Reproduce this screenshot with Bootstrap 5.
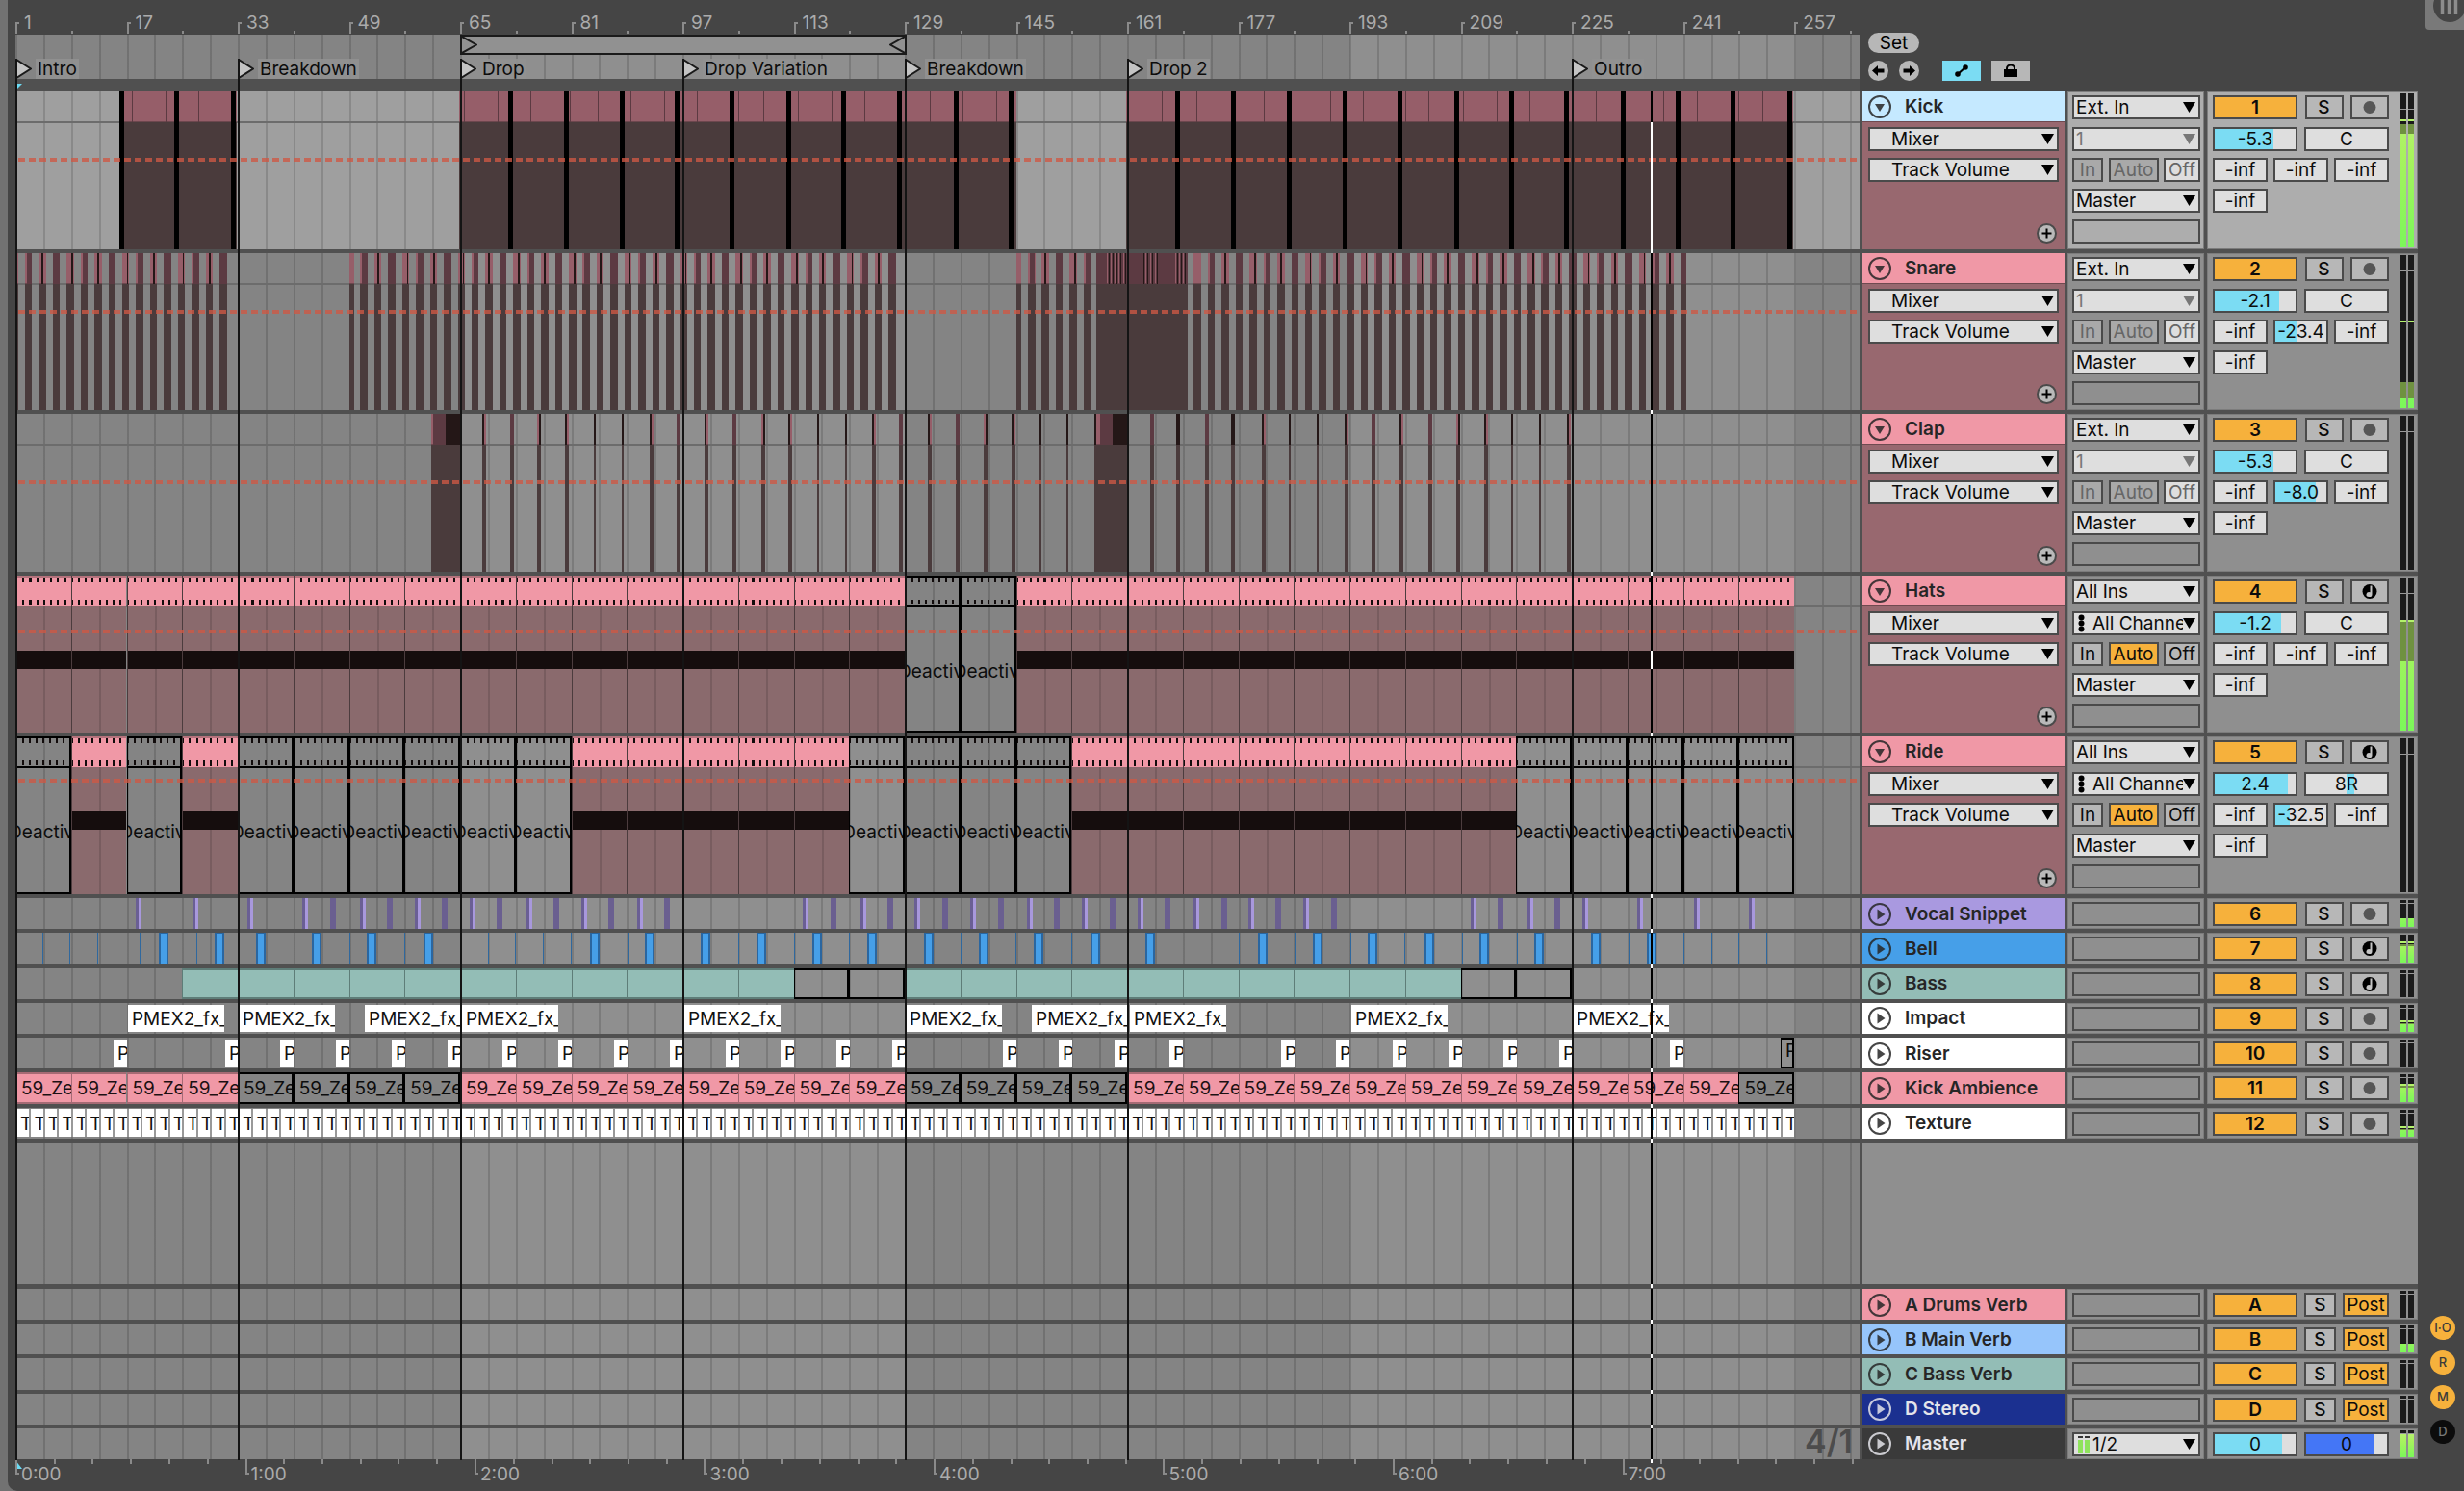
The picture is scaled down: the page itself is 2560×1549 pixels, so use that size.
<!DOCTYPE html>
<html lang="en">
<head>
<meta charset="utf-8">
<meta name="viewport" content="width=device-width, initial-scale=1">
<title>Arrangement View</title>
<link href="https://cdn.jsdelivr.net/npm/bootstrap@5.3.0/dist/css/bootstrap.min.css" rel="stylesheet">
<style>
:root{
  --panel:#454545; --gapline:#505050; --edge:#4a4a4a; --field:#dedede; --btn:#b7b7b7;
  --amber:#f6b13c; --cyan:#7bdcf3; --band-a:#848484; --band-b:#8f8f8f; --pink:#f098a6;
  --lane-grid:repeating-linear-gradient(90deg,rgba(0,0,0,.14) 0 2px,transparent 2px 1.50716%);
  --lane-bands:linear-gradient(90deg,var(--band-a) 24.13%,var(--band-b) 24.13% 48.24%,var(--band-a) 48.24% 72.37%,var(--band-b) 72.37% 96.53%,var(--band-a) 96.53%);
}
body{font-family:Inter,"Liberation Sans",sans-serif;font-size:19px;line-height:24px;background:#727272;color:#0c0c0c;overflow:hidden}
.app-shell{margin-left:8px;background:var(--panel);border-bottom-left-radius:10px}
.app-top{height:95px;padding-left:8px}
.arrange{padding:0 48px 0 8px}
.col-name{width:210px}.col-io{width:142px}.col-mix{width:219px}
.col-side{width:625px;margin-left:3px}
/* rulers */
.ruler-bars{height:36px}
.ruler-bars .bar-num{position:absolute;top:12px;line-height:24px;padding-left:9px;color:#ababab}
.ruler-bars .bar-num::before{content:"";position:absolute;left:0;top:11px;width:4px;height:12px;border:solid #8a8a8a;border-width:2px 0 0 2px}
.tick-minor{position:absolute;bottom:1px;width:2px;height:3px;background:#8a8a8a}
.scrub{height:46px;background:var(--lane-grid),var(--lane-bands)}
.under-scrub{height:13px;background:var(--gapline)}
.loop-brace{position:absolute;top:0;height:21px;border:2px solid #1a1a1a;background:#919191}
.locator{position:absolute;top:25px;height:21px;display:flex;align-items:center;gap:4px;white-space:nowrap}
.locator span{background:rgba(145,145,145,.9);padding:0 2px;line-height:21px}
.play-mark{position:absolute;left:1px;bottom:2px;width:6px;height:6px;background:#6bdcf5;clip-path:polygon(0 0,100% 0,0 100%)}
.ruler-time{height:29px;padding-left:8px;margin-right:628px}
.ruler-time .t-num{position:absolute;top:0;padding-left:6px;color:#ababab;line-height:24px}
.ruler-time .t-num::before{content:"";position:absolute;left:0;top:-4px;width:4px;height:16px;border:solid #8a8a8a;border-width:0 0 2px 2px}
.ruler-time .t-tick{position:absolute;top:-4px;width:2px;height:5px;background:#8a8a8a}
.start-mark{position:absolute;left:0;top:-3px;width:7px;height:9px;background:#6bdcf5;clip-path:polygon(0 0,100% 100%,0 100%)}
/* rows */
.tracks-open{height:838px}.tracks-folded{height:254px}.tracks-return{height:181px}
.track{border-bottom:4px solid var(--gapline);background:var(--gapline);gap:3px}
.tracks-return .track:last-child{border-bottom-color:var(--panel)}
.empty-zone{border-bottom:5px solid var(--gapline);background:var(--gapline);gap:3px}
.empty-side{width:577px;background:#8f8f8f}
.lane{background:var(--lane-grid),var(--lane-bands)}
.tracks-open .lane::after{content:"";position:absolute;left:0;right:0;top:31px;height:2px;background:#6c6c6c;z-index:0}
.selected .lane{--lane-bands:linear-gradient(#9f9f9f,#9f9f9f)}
.seg{position:absolute;z-index:1;overflow:hidden;white-space:nowrap}
.seg-head{top:0;height:32px}.seg-body{top:32px;bottom:0}.seg-full{top:0;bottom:0}
.env{position:absolute;left:3px;right:0;height:4px;z-index:3;background:repeating-linear-gradient(90deg,rgba(206,88,68,.78) 0 7px,transparent 7px 11px)}
.c-kick{background:#965e69;box-shadow:inset 0 -1px #6d474e}
.c-kbody{background:#4a3b3c}.c-dark{background:#5c3a42}.c-ink{background:#241717}.c-black{background:#000}
.mclip{position:absolute;z-index:1;top:0;bottom:0;overflow:hidden;white-space:nowrap;border-left:1px solid #4c3c3e;background:linear-gradient(90deg,transparent 49.5%,rgba(0,0,0,.13) 49.5% 53%,transparent 53%) #8a6a6d}
.mclip .m-head{height:32px;background:var(--pink);border-top:2px solid #b4727c}
.mclip .m-ticks{height:29px;margin-left:-1px;--tk:repeating-linear-gradient(90deg,#120c0c 0 2px,transparent 2px 12.5%);background:var(--tk) 0 0/100% 5px no-repeat,var(--tk) 0 23px/100% 6px no-repeat}
.mclip .m-band{position:absolute;left:0;right:0;top:78px;height:19px;background:#150d0d}
.mclip.off{background:none;border:2px solid #000;border-left-width:1px}
.mclip.off .m-head{background:none;border-top:0;height:31px;border-bottom:2px solid #000}
.mclip.off .m-ticks{height:28px}
.mclip .m-text{position:absolute;left:-8px;top:86px}
.c-vocal{background:#a898dc;border-left:3px solid #6a5f94}.c-vocal2{background:#6a5f90}
.c-bell{background:#469fe8;border:solid #2a66a0;border-width:1px 2px}.c-bell-line{background:#2f689e}
.c-bass{background:#93bdb6;border:solid #5e7d78;border-width:2px 0 2px 1px}
.c-off{border:2px solid #000;border-left-width:1px}
.c-paper{top:2px;bottom:2px;background:#fff;color:#111;padding-left:4px;line-height:30px}
.c-amb{background:var(--pink);border:solid #a56a74;border-width:2px 0 2px 1px;padding-left:5px;line-height:30px;color:#1c1012}
.c-amboff{border:2px solid #000;border-left-width:1px;padding-left:5px;line-height:30px;background:#858585}
.c-tex{top:1px;bottom:2px;background:#fff;border-left:2px solid #999;padding-left:3px;line-height:31px;color:#111}
.ph{position:absolute;z-index:5;top:0;bottom:0;width:2px;background:#000}
.ph::after{content:"";position:absolute;left:0;width:2px;top:100%;height:4px;background:#fff}
.ph-kick{background:linear-gradient(#000 32px,#fff 32px)}
.ph-hats{background:linear-gradient(#000 78px,#fff 78px 97px,#000 97px)}
.marker-layer{inset:0 628px 0 8px;pointer-events:none;z-index:6}
.marker-line{position:absolute;top:-34px;bottom:3px;width:2px;background:#141414}
.quant{position:absolute;right:7px;bottom:2px;font-size:34px;line-height:32px;font-weight:600;color:#4c4c4c;z-index:4}
/* headers */
.name-bar{height:32px;padding:1px 0 0 6px;gap:14px;font-weight:600;color:#262626}
.tracks-open .name-bar{border-bottom:1px solid #6f4a50}
.name-light{color:#e4e4ea}
.fold-btn{padding:0;border:0;background:none;color:inherit;line-height:0;opacity:.85}
.name-body{background:#98686f;padding:5px 6px 0 6px;gap:7px}
.sel{-webkit-appearance:none;appearance:none;height:25px;border:2px solid var(--edge);border-radius:0;font:inherit;line-height:21px;color:#0c0c0c;padding:0 22px 0 2px;width:100%;
 background:url("data:image/svg+xml,%3Csvg xmlns='http://www.w3.org/2000/svg' width='13' height='12'%3E%3Cpath d='M0 1h13L6.500 12z'/%3E%3C/svg%3E") right 3px top 4px no-repeat var(--field)}
.sel-wide{padding-left:22px}
.sel:disabled{color:#777;opacity:1;background-image:url("data:image/svg+xml,%3Csvg xmlns='http://www.w3.org/2000/svg' width='13' height='12'%3E%3Cpath fill='%23777' d='M0 1h13L6.500 12z'/%3E%3C/svg%3E")}
.sel-chan{padding-left:19px;padding-right:16px}
.sel-ico{position:absolute;left:6px;top:3px}
.plus-btn{position:absolute;right:8px;bottom:6px;padding:0;border:0;background:none;line-height:0}
.panel-cell{background:#8f8f8f;padding:4px 4px 0 5px;box-shadow:inset 0 0 0 1px #7c7c7c}
.selected .panel-cell{background:#adadad}
.col-mix.panel-cell{padding:4px 0 0 6px}
.ctl-stack{gap:7px}
.tracks-open .ctl-stack>:first-child{margin-bottom:1px}
.ctl{height:25px;border:2px solid var(--edge);border-radius:0;padding:0;font:inherit;line-height:21px;background:var(--btn);color:#0c0c0c;text-align:center;flex:none;overflow:hidden;white-space:nowrap}
.ctl-on{background:var(--amber)}
.ctl-dim{color:#666;background:#a9a9a9}
.ctl-dim.ctl-lit{background:var(--field)}
.ctl-blank{height:25px;border:2px solid var(--edge)}
.ctl-num{width:88px;font-weight:600}.w40{width:40px}.w33{width:33px}.w48{width:48px}.w88{width:88px}.w57{width:57px}.w32{width:32px}.w52{width:52px}.w38{width:38px}
.ctl-s{font-weight:500}
.val{background:linear-gradient(90deg,transparent var(--from,0%),var(--tone,var(--cyan)) var(--from,0%) var(--to,0%),transparent var(--to,0%)) var(--field)}
.mix-grid{width:183px;gap:7px}
.meters{position:absolute;right:4px;top:2px;bottom:2px;gap:2px}
.meter{width:6px;background:linear-gradient(#9a9a9a,#9a9a9a) 0 var(--mark,3px)/100% 1px no-repeat,linear-gradient(to top,transparent var(--pk),#b4f26c var(--pk) calc(var(--pk) + var(--pw,0px)),transparent 0),linear-gradient(to top,transparent var(--lv),var(--dimtone,#6f9140) var(--lv) var(--dm),transparent 0),linear-gradient(to top,transparent var(--lv),#1b1b1b var(--lv)),linear-gradient(to top,#7bf75a,#a8f25e 60%,#bdf078)}
.tracks-open .meter{--mark:16px}
/* top right & right rail */
.pill{width:53px;height:21px;border:0;border-radius:11px;background:#b7b7b7;padding:0;line-height:21px}
.tool-row{gap:11px}
.round-btn{width:21px;height:21px;border:0;border-radius:50%;padding:0;background:#b7b7b7;line-height:0}
.flat-btn{width:40px;height:21px;border:0;padding:0;background:#b7b7b7;line-height:0}
.flat-on{background:var(--cyan);margin-left:13px}
.top-tools{padding:34px 0 0 6px}
.corner-tab{position:absolute;right:0;top:0;width:40px;height:31px;border:0;padding:0;background:#797979;border-bottom-left-radius:4px;line-height:0}
.rail{position:absolute;right:9px;bottom:49px;gap:11px}
.rail button{width:26px;height:25px;border:0;border-radius:50%;padding:0;background:var(--amber);color:#3a3a3a;font-size:13px;line-height:25px;font-weight:500}
.rail .rail-off{background:#0c0c0c;color:#777}
</style>
</head>
<body>
<div class="app-shell vh-100 d-flex flex-column position-relative">
  <header class="app-top d-flex flex-shrink-0">
    <div class="flex-fill">
      <div class="ruler-bars position-relative" id="barRuler"></div>
      <div class="scrub position-relative" id="scrub"></div>
      <div class="under-scrub position-relative"><div class="play-mark"></div></div>
    </div>
    <div class="col-side top-tools">
      <button class="pill d-block" type="button">Set</button>
      <div class="tool-row d-flex mt-2">
        <button class="round-btn" type="button" aria-label="Previous locator"><svg width="21" height="21"><path d="M4 10.500l6-5.500v3.500h6.500v4H10V16z"/></svg></button>
        <button class="round-btn" type="button" aria-label="Next locator"><svg width="21" height="21"><path d="M17 10.500l-6-5.500v3.500H4.500v4H11V16z"/></svg></button>
        <button class="flat-btn flat-on" type="button" aria-label="Automation mode"><svg width="40" height="21"><circle cx="16" cy="14" r="2.800"/><circle cx="24" cy="7" r="2.800"/><path d="M16 14l8-7" stroke="#000" stroke-width="2.200"/></svg></button>
        <button class="flat-btn" type="button" aria-label="Lock envelopes"><svg width="40" height="21"><rect x="13" y="9" width="14" height="8"/><path d="M16 10V8a4 3.500 0 0 1 8 0V10" fill="none" stroke="#000" stroke-width="2"/></svg></button>
      </div>
    </div>
  </header>

  <main class="arrange flex-fill d-flex flex-column position-relative">
    <section class="tracks-open d-flex flex-column" id="openTracks"></section>
    <section class="tracks-folded d-flex flex-column" id="foldedTracks"></section>
    <div class="empty-zone flex-fill d-flex">
      <div class="lane flex-fill position-relative"><i class="ph"></i></div>
      <div class="empty-side"></div>
    </div>
    <section class="tracks-return d-flex flex-column" id="returnTracks"></section>
    <div class="marker-layer position-absolute" id="markers"></div>
  </main>

  <footer class="ruler-time"><div class="position-relative h-100" id="timeRuler"></div></footer>

  <button class="corner-tab" type="button" aria-label="Scroll handle"><svg width="40" height="31"><circle cx="25" cy="6" r="17" fill="#454545"/><path d="M17.500 0v15M24.500 0v15M31.500 0v15" stroke="#8c8c8c" stroke-width="3.500"/></svg></button>
  <div class="rail d-flex flex-column">
    <button type="button">I·O</button><button type="button">R</button><button type="button">M</button><button class="rail-off" type="button">D</button>
  </div>
</div>

<script src="https://cdn.jsdelivr.net/npm/bootstrap@5.3.0/dist/js/bootstrap.bundle.min.js"></script>
<script>
const BARS = 265.4, SPAN = 1916;
const pct = u => (u / SPAN * 100).toFixed(3) + '%';        // timeline unit -> lane share
const bar = b => (b - 1) / BARS * SPAN;                     // bar number -> timeline unit
const box = (cls, a, b, html = '') => `<div class="${cls}" style="left:${pct(a)};width:${pct(b - a)}">${html}</div>`;
const seg = (kind, color, a, b, html) => box(`seg seg-${kind} ${color}`, a, b, html);
const dot = (cls, a, html = '') => `<div class="${cls}" style="left:${pct(a)}">${html}</div>`;
const seq = n => [...Array(n).keys()];

/* ---- rulers ---- */
document.getElementById('barRuler').innerHTML =
  seq(17).map(i => dot('bar-num', bar(1 + 16 * i), 1 + 16 * i)).join('') +
  seq(17).map(i => dot('tick-minor', bar(9 + 16 * i))).join('');
const flag = '<svg width="17" height="21"><path d="M1 1v19l15-9.500z" fill="#c4c4c4" stroke="#1a1a1a" stroke-width="2"/></svg>';
const LOCS = [[1, 'Intro'], [33, 'Breakdown'], [65, 'Drop'], [97, 'Drop Variation'], [129, 'Breakdown'], [161, 'Drop 2'], [225, 'Outro']];
document.getElementById('scrub').innerHTML =
  box('loop-brace d-flex justify-content-between', bar(65), bar(129) + 2,
    '<svg width="16" height="17"><path d="M0 0l15 8.500L0 17" fill="none" stroke="#1a1a1a" stroke-width="2"/></svg><svg width="16" height="17"><path d="M16 0L1 8.500 16 17" fill="none" stroke="#1a1a1a" stroke-width="2"/></svg>') +
  LOCS.map(l => dot('locator', bar(l[0]), flag + `<span>${l[1]}</span>`)).join('');
document.getElementById('markers').innerHTML = LOCS.map(l => dot('marker-line', bar(l[0]))).join('');
document.getElementById('timeRuler').innerHTML = '<div class="start-mark"></div>' +
  seq(8).map(i => dot('t-num', 238.500 * i, i + ':00')).join('') +
  seq(49).filter(i => i % 6 || i == 48).map(i => dot('t-tick', 238.500 / 6 * i)).join('');

/* ---- lane contents ---- */
const px = s => s.split(' ').map(x => +x - 16);
function kickLane() {
  const runs = [[124, 246], [477, 1056], [1170, 1863]];
  const black = px('124 181 240 528 586 644 701 758 817 874 932 991 1048 1221 1279 1337 1395 1452 1511 1568 1625 1684 1741 1798 1857');
  const thin = px('137 172 206 482 517 551 592 621 655 690 724 767 793 829 864 898 966 1000 1035 1207 1243 1313 1346 1382 1416 1460 1484 1520 1555 1589 1658 1693 1728 1763 1806 1831');
  return runs.map(r => seg('head', 'c-kick', r[0] - 16, r[1] - 16) + seg('body', 'c-kbody', r[0] - 16, r[1] - 16)).join('') +
    thin.map(x => seg('head', 'c-dark', x, x + 1.500)).join('') + black.map(x => seg('full', 'c-black', x, x + 5.500)).join('');
}
function snareLane() {
  let h = '';
  const step = bar(3), run = (from, to, lead) => {
    let k = 0;
    for (let x = from + lead; x < to - 4; x += step, k++) {
      const a = Math.max(x, from), b = Math.min(x + 7.500, to);
      h += seg('body', 'c-kbody', a, b) + seg('head', k % 4 == 3 ? 'c-dark' : 'c-kick', a, b);
      if (k % 4 == 1) h += seg('head', 'c-dark', a + 2, b);
      if (k % 4 == 2) h += seg('head', 'c-ink', a + 3, a + 5);
      if (k % 4 == 0 && k) h += seg('head', 'c-ink', a + 5, a + 6.500);
    }
  };
  run(0, 221, -4.500); run(bar(49), 916, -2.500); run(bar(145), 1123, -2); run(1218, 1736, 6.500);
  h += seg('body', 'c-kbody', 1123, 1218) + seg('head', 'c-dark', 1123, 1218);
  [1134, 1138, 1142, 1146, 1151, 1170, 1174, 1179, 1184, 1205, 1209, 1213].forEach(x => h += seg('head', 'c-kick', x, x + 1.500) + seg('head', 'c-ink', x + 2, x + 3));
  return h;
}
function clapLane() {
  let h = '';
  [[448, 479], [1141, 1172]].forEach(([a, b]) => h += seg('body', 'c-kbody', a - 16, b - 16) + seg('head', 'c-dark', a - 16, b - 16) + seg('head', 'c-kick', a - 16, a - 14) + seg('head', 'c-ink', a - 1, b - 16));
  px('501 530 558 587 617 646 675 703 732 761 791 819 849 878 906 934 964 993 1022 1051 1080 1108 1137 1195 1222 1252 1279 1311 1339 1368 1397 1425 1454 1484 1513 1542 1570 1599 1628').forEach((x, i) => {
    const m = i % 8, w = (m == 4 || m == 5) ? 2 : 4;
    h += seg('body', 'c-kbody', x, x + w);
    if (w == 2) h += seg('head', 'c-ink', x, x + 2);
    else if (m == 1 || m == 7) h += seg('head', 'c-dark', x, x + 4);
    else h += seg('head', 'c-ink', x, x + 4) + seg('head', 'c-kick', m % 3 ? x : x + 2, m % 3 ? x + 2 : x + 4);
  });
  h += seg('head', 'c-ink', 1206, 1210) + seg('head', 'c-ink', 1263, 1267);
  return h;
}
const eight = (fn) => seq(32).map(k => fn(k, bar(1 + 8 * k), bar(9 + 8 * k))).join('');
const midiLane = off => eight((k, a, b) => off.includes(k)
  ? box('mclip off', a, b, '<div class="m-head"><div class="m-ticks"></div></div><span class="m-text">Deactiv</span>')
  : box('mclip', a, b, '<div class="m-head"><div class="m-ticks"></div></div><div class="m-band"></div>'));
function vocalLane() {
  const lit = px('141 200 257 314 374 431 488 547 604 662 834 894 950 1008 1067 1124 1182 1240 1297 1354 1528 1587 1644 1701 1760 1817');
  const dim = px('343 402 459 516 575 632 690 863 922 979 1037 1095 1153 1210 1269 1325 1383 1556 1615');
  return lit.map(x => seg('full', 'c-vocal', x, x + 6)).join('') + dim.map(x => seg('full', 'c-vocal2', x, x + 6)).join('');
}
function bellLane() {
  const line = px('44 72 101 145 204 306 363 420 507 535 564 593 652 767 825 882 998 1055 1113 1287 1345 1403 1459 1519 1576 1692 1749 1778 1806 1835');
  const blk = px('165 223 266 324 381 440 613 670 728 786 844 901 960 1017 1074 1133 1190 1307 1364 1421 1480 1537 1594 1653 1711');
  return line.map(x => seg('full', 'c-bell-line', x, x + 1.500)).join('') + blk.map(x => seg('full', 'c-bell', x, x + 10.500)).join('');
}
const bassLane = () => eight((k, a, b) => k < 3 || k > 27 ? '' : seg('full', [14, 15, 26, 27].includes(k) ? 'c-off' : 'c-bass', a, b));
const impactLane = () => px('133 248 379 480 711 941 1072 1174 1404 1634').map(x => seg('x', 'c-paper', x, x + 100, 'PMEX2_fx_')).join('');
const riserLane = () => px('118 234 291 349 407 465 522 580 638 696 754 811 869 927 1042 1100 1158 1215 1331 1388 1447 1505 1562 1620 1735').map(x => seg('x', 'c-paper', x, x + 14, 'P')).join('') + seg('full', 'c-off', 1834, 1848.500, '<span class="ms-1">P</span>');
const ambLane = () => eight((k, a, b) => seg('full', [4, 5, 6, 7, 16, 17, 18, 19, 31].includes(k) ? 'c-amboff' : 'c-amb', a, b, '59_Ze'));
const texLane = () => seq(128).map(k => seg('x', 'c-tex', bar(1 + 2 * k), bar(3 + 2 * k), 'T')).join('');

/* ---- controls ---- */
const tri = { down: 'M7 9h10L12 17z', right: 'M9.500 6.500v11l8-5.500z' };
const fold = d => `<button class="fold-btn" type="button" aria-label="Fold track"><svg width="24" height="24"><circle cx="12" cy="12" r="11" fill="none" stroke="currentColor" stroke-width="2"/><path d="${tri[d]}" fill="currentColor"/></svg></button>`;
const select = (label, text, cls = '', dis = '') => `<select class="sel ${cls}" aria-label="${label}" ${dis}><option>${text}</option></select>`;
const val = (label, text, w, to = 0, from = 0, tone = '') => `<input class="ctl val ${w}" aria-label="${label}" value="${text}" style="--from:${from}%;--to:${to}%${tone ? ';--tone:' + tone : ''}">`;
const recIcon = '<svg width="36" height="21" class="d-block"><circle cx="18" cy="10.500" r="6.500" fill="#565656"/></svg>';
const midiIcon = '<svg width="36" height="21" class="d-block"><circle cx="18" cy="10.500" r="7.500"/><path d="M18.500 4.500h2v9a3 2.500 0 1 1-2-2.300z" fill="#c4c4c4"/></svg>';
const chanIcon = '<svg class="sel-ico" width="7" height="19"><circle cx="3.500" cy="3.500" r="3"/><circle cx="3.500" cy="9.500" r="3"/><circle cx="3.500" cy="15.500" r="3"/></svg>';
const outIcon = '<svg class="sel-ico" width="12" height="19"><path d="M0 1h5v2H0zM7 1h5v2H7z" fill="#333"/><path d="M0 5h5v14H0zM7 5h5v14H7z" fill="#8fe35c"/></svg>';
const meter = m => `<div class="meters d-flex">${[0, 1].map(i => `<div class="meter" style="--lv:${m[0]}%;--dm:${m[1]}%;--pk:${m[2]}%;--pw:${m[2] ? 2 : 0}px"></div>`).join('')}</div>`;
const numRow = (n, midi) => `<div class="d-flex justify-content-between"><button class="ctl ctl-on ctl-num" type="button">${n}</button><button class="ctl ctl-s w40" type="button">S</button><button class="ctl w40" type="button" aria-label="Arm">${midi ? midiIcon : recIcon}</button></div>`;
const ph = cls => `<i class="ph ${cls || ''}"></i>`;

const open = [
  ['Kick', '#c5e9ff', kickLane, 69, 0, '-5.3', 73, 'C', 0, ['-inf', '-inf', '-inf'], 0, [74, 80, 82], 'ph-kick'],
  ['Snare', '#f098a6', snareLane, 59, 0, '-2.1', 80, 'C', 0, ['-inf', '-23.4', '-inf'], 42, [6, 17, 56]],
  ['Clap', '#f098a6', clapLane, 69, 0, '-5.3', 73, 'C', 0, ['-inf', '-8.0', '-inf'], 80, [0, 0, 0]],
  ['Hats', '#f098a6', () => midiLane([16, 17]), 56, 1, '-1.2', 82, 'C', 0, ['-inf', '-inf', '-inf'], 0, [45, 71, 71], 'ph-hats'],
  ['Ride', '#f098a6', () => midiLane([0, 2, 4, 5, 6, 7, 8, 9, 15, 16, 17, 18, 27, 28, 29, 30, 31]), 44, 1, '2.4', 91, '8R', 1, ['-inf', '-32.5', '-inf'], 28, [0, 0, 0]]
];
document.getElementById('openTracks').innerHTML = open.map((t, i) => {
  const midi = t[4], d = midi ? '' : 'ctl-dim';
  return `<div class="track d-flex flex-fill ${i ? '' : 'selected'}">
  <div class="lane flex-fill position-relative overflow-visible">${t[2]()}<div class="env" style="top:${t[3]}px"></div>${ph(t[12])}</div>
  <div class="col-name d-flex flex-column">
    <div class="name-bar d-flex align-items-center" style="background:${t[1]}">${fold('down')}<span>${t[0]}</span></div>
    <div class="name-body flex-fill d-flex flex-column position-relative">${select('Device', 'Mixer', 'sel-wide')}${select('Parameter', 'Track Volume', 'sel-wide')}
      <button class="plus-btn" type="button" aria-label="Add lane"><svg width="21" height="21"><circle cx="10.500" cy="10.500" r="9.500" fill="#b9b9b9" stroke="#4a4a4a" stroke-width="2"/><path d="M10.500 5.500v10M5.500 10.500h10" stroke="#000" stroke-width="2"/></svg></button>
    </div>
  </div>
  <div class="col-io panel-cell"><div class="ctl-stack d-flex flex-column">
    ${select('Input type', midi ? 'All Ins' : 'Ext. In')}
    <div class="position-relative d-flex">${midi ? select('Input channel', 'All Channels', 'sel-chan') + chanIcon : select('Input channel', '1', '', 'disabled')}</div>
    <div class="d-flex justify-content-between"><button class="ctl w32 ${d}" type="button">In</button><button class="ctl w52 ${midi ? 'ctl-on' : d}" type="button">Auto</button><button class="ctl w38 ${midi ? '' : d + ' ctl-lit'}" type="button">Off</button></div>
    ${select('Output type', 'Master')}
    <div class="ctl-blank"></div></div>
  </div>
  <div class="col-mix panel-cell position-relative"><div class="ctl-stack mix-grid d-flex flex-column">
    ${numRow(i + 1, midi)}
    <div class="d-flex justify-content-between">${val('Volume', t[5], 'w88', t[6])}${val('Pan', t[7], 'w88', t[8] ? 60 : 0, t[8] ? 50 : 0)}</div>
    <div class="d-flex justify-content-between">${val('Send A', t[9][0], 'w57')}${val('Send B', t[9][1], 'w57', t[10])}${val('Send C', t[9][2], 'w57')}</div>
    ${val('Send D', '-inf', 'w57')}</div>${meter(t[11])}</div>
</div>`;
}).join('');

const folded = [
  ['Vocal Snippet', '#a999e0', vocalLane, 0, [33, 33, 0]], ['Bell', '#469fe8', bellLane, 1, [60, 66, 70]], ['Bass', '#93bdb6', bassLane, 1, [0, 0, 0]],
  ['Impact', '#ffffff', impactLane, 0, [30, 33, 36]], ['Riser', '#ffffff', riserLane, 0, [0, 0, 0]], ['Kick Ambience', '#f098a6', ambLane, 0, [52, 57, 60]], ['Texture', '#ffffff', texLane, 0, [25, 29, 31]]
];
document.getElementById('foldedTracks').innerHTML = folded.map((t, i) => `<div class="track d-flex flex-fill">
  <div class="lane flex-fill position-relative">${t[2]()}${ph()}</div>
  <div class="col-name"><div class="name-bar h-100 d-flex align-items-center" style="background:${t[1]}">${fold('right')}<span>${t[0]}</span></div></div>
  <div class="col-io panel-cell"><div class="ctl-blank"></div></div>
  <div class="col-mix panel-cell position-relative"><div class="mix-grid">${numRow(i + 6, t[3])}</div>${meter(t[4])}</div>
</div>`).join('');

const returns = [['A Drums Verb', '#f098a6', 'A', [0, 0, 0]], ['B Main Verb', '#96c5fb', 'B', [33, 33, 0]], ['C Bass Verb', '#93bdb6', 'C', [0, 0, 0]], ['D Stereo', '#1b3090', 'D', [0, 0, 0]], ['Master', '#3a3a3a', '', [86, 90, 0]]];
document.getElementById('returnTracks').innerHTML = returns.map((t, i) => `<div class="track d-flex flex-fill">
  <div class="lane flex-fill position-relative">${i < 4 ? ph() : ph() + '<span class="quant">4/1</span>'}</div>
  <div class="col-name"><div class="name-bar h-100 d-flex align-items-center ${i > 2 ? 'name-light' : ''}" style="background:${t[1]}">${fold('right')}<span>${t[0]}</span></div></div>
  <div class="col-io panel-cell"><div class="position-relative">${t[2] ? '<div class="ctl-blank"></div>' : select('Master output', '1/2', 'sel-chan') + outIcon}</div></div>
  <div class="col-mix panel-cell position-relative"><div class="mix-grid d-flex justify-content-between">${t[2]
    ? `<button class="ctl ctl-on ctl-num" type="button">${t[2]}</button><button class="ctl ctl-s w33" type="button">S</button><button class="ctl ctl-on w48" type="button">Post</button>`
    : val('Master volume', '0', 'w88', 83) + val('Cue volume', '0', 'w88', 83, 0, '#4476f6')}</div>${meter(t[3])}</div>
</div>`).join('');
document.querySelectorAll('.ph').forEach(p => p.style.left = pct(1699));
</script>
</body>
</html>
